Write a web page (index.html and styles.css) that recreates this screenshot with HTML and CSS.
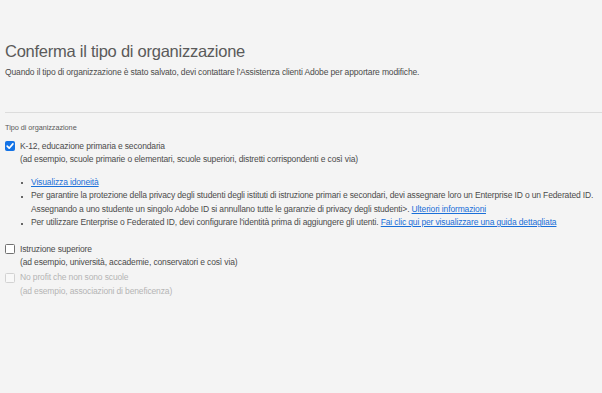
FILE: index.html
```html
<!DOCTYPE html>
<html>
<head>
  <meta charset="utf-8">
  <title>Conferma il tipo di organizzazione</title>
  <link rel="stylesheet" href="styles.css">
</head>
<body>
  <div class="page">
    <h1>Conferma il tipo di organizzazione</h1>
    <p class="intro">Quando il tipo di organizzazione è stato salvato, devi contattare l'Assistenza clienti Adobe per apportare modifiche.</p>

    <div class="org-type">
      <div class="field-label">Tipo di organizzazione</div>

      <div class="option option-k12">
        <span class="checkbox checked">
          <svg viewBox="0 0 10 10" width="10" height="10"><path d="M2.2 5.2 L4.2 7.2 L7.9 2.9" fill="none" stroke="#fff" stroke-width="1.7" stroke-linecap="round" stroke-linejoin="round"/></svg>
        </span>
        <div class="option-text">
          <div class="option-title">K-12, educazione primaria e secondaria</div>
          <div class="option-desc">(ad esempio, scuole primarie o elementari, scuole superiori, distretti corrispondenti e così via)</div>
          <ul class="notes">
            <li><a href="#">Visualizza idoneità</a></li>
            <li>Per garantire la protezione della privacy degli studenti degli istituti di istruzione primari e secondari, devi assegnare loro un Enterprise ID o un Federated ID. Assegnando a uno studente un singolo Adobe ID si annullano tutte le garanzie di privacy degli studenti&gt;. <a href="#">Ulteriori informazioni</a></li>
            <li>Per utilizzare Enterprise o Federated ID, devi configurare l'identità prima di aggiungere gli utenti. <a href="#">Fai clic qui per visualizzare una guida dettagliata</a></li>
          </ul>
        </div>
      </div>

      <div class="option option-higher">
        <span class="checkbox"></span>
        <div class="option-text">
          <div class="option-title">Istruzione superiore</div>
          <div class="option-desc">(ad esempio, università, accademie, conservatori e così via)</div>
        </div>
      </div>

      <div class="option disabled">
        <span class="checkbox"></span>
        <div class="option-text">
          <div class="option-title">No profit che non sono scuole</div>
          <div class="option-desc">(ad esempio, associazioni di beneficenza)</div>
        </div>
      </div>
    </div>
  </div>
</body>
</html>
```

FILE: styles.css
```css
body {
  margin: 0;
  background: #f4f4f4;
  color: #4b4b4b;
  font-family: "Liberation Sans", Arial, sans-serif;
  font-size: 8.5px;
  letter-spacing: -0.14px;
  line-height: 13.4px;
}

.page {
  padding: 40px 0 0 5px;
}

h1 {
  margin: 0;
  font-size: 16.5px;
  letter-spacing: -0.25px;
  line-height: 22px;
  font-weight: normal;
  color: #5a5a5a;
}

.intro {
  margin: 4px 0 0 0;
}

.org-type {
  margin-top: 33px;
  border-top: 1px solid #dcdcdc;
}

.field-label {
  margin-top: 9px;
  font-size: 7.3px;
  letter-spacing: -0.05px;
  line-height: 12px;
  color: #5a5a5a;
}

.option {
  display: flex;
  gap: 5px;
}

.option-k12 {
  margin-top: 5.5px;
}

.option-higher {
  margin-top: 13px;
}

.option.disabled {
  margin-top: 2px;
  color: #b4b4b4;
}

.checkbox {
  flex-shrink: 0;
  width: 8px;
  height: 8px;
  margin-top: 1.5px;
  border: 1px solid #717171;
  border-radius: 1.5px;
  background: #fff;
  display: flex;
  align-items: center;
  justify-content: center;
}

.checkbox.checked {
  background: #1473e6;
  border-color: #1473e6;
}

.checkbox svg {
  width: 10px;
  height: 10px;
  flex-shrink: 0;
}

.disabled .checkbox {
  border-color: #d2d2d2;
  background: #f8f8f8;
}

.notes {
  list-style: none;
  margin: 9.2px 0 0 0;
  padding: 0 0 0 11px;
}

.notes li {
  position: relative;
}

.notes li::before {
  content: "";
  position: absolute;
  left: -10px;
  top: 6.5px;
  width: 2px;
  height: 2px;
  background: #666;
}

a {
  color: #1a6fd8;
  text-decoration: underline;
}
```
